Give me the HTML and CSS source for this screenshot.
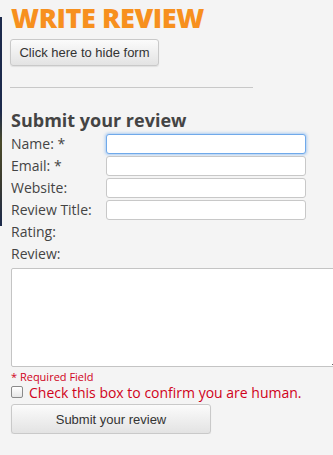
FILE: index.html
```html
<!DOCTYPE html>
<html>
<head>
<meta charset="utf-8">
<link rel="stylesheet" href="styles.css">
</head>
<body>
<div class="edge"></div>
<div class="page">
  <h1 class="title">WRITE REVIEW</h1>
  <button class="btn hide-btn">Click here to hide form</button>
  <hr class="rule">
  <h2 class="subtitle">Submit your review</h2>
  <form class="form">
    <div class="row"><label>Name: *</label><input class="field focus" type="text"></div>
    <div class="row"><label>Email: *</label><input class="field" type="text"></div>
    <div class="row"><label>Website:</label><input class="field" type="text"></div>
    <div class="row"><label>Review Title:</label><input class="field" type="text"></div>
    <div class="row"><label>Rating:</label></div>
    <div class="row"><label>Review:</label></div>
    <textarea class="area"></textarea>
    <div class="req">* Required Field</div>
    <div class="human"><span class="box"></span><span>Check this box to confirm you are human.</span></div>
    <button type="button" class="btn submit-btn">Submit your review</button>
  </form>
</div>
</body>
</html>
```
FILE: styles.css
```css
html, body {
  margin: 0;
  padding: 0;
  background: #f4f4f4;
  overflow: hidden;
}
.edge {
  position: absolute;
  left: 0;
  top: 17px;
  width: 2px;
  height: 209px;
  background: linear-gradient(#1c2a4c 0%, #1c2a4c 45%, #4a4a2a 60%, #3a3a30 80%, #1c2a4c 100%);
}
.page {
  padding: 0 0 0 11px;
  font-family: "Open Sans", sans-serif;
  color: #444;
}
.title {
  margin: 0;
  padding-top: 1px;
  font-size: 27px;
  line-height: 34px;
  font-weight: 800;
  color: #f7901e;
  letter-spacing: -0.4px;
  height: 36px;
}
.btn {
  display: block;
  font-family: "Liberation Sans", Arial, sans-serif;
  font-size: 13px;
  color: #333;
  background: linear-gradient(#fbfbfb, #e3e3e3);
  border: 1px solid #c9c9c9;
  border-radius: 3px;
  box-shadow: 0 1px 1px rgba(0,0,0,0.08);
  padding: 0;
}
.hide-btn {
  margin-left: -1px;
  width: 149px;
  height: 27px;
  margin-top: 2px;
}
.rule {
  margin: 21px 0 0 -1px;
  width: 243px;
  border: 0;
  border-top: 1px solid #c8c8c8;
  height: 0;
}
.subtitle {
  margin: 21px 0 0 0;
  font-size: 18px;
  line-height: 22px;
  font-weight: 700;
  color: #444;
  height: 24px;
}
.form {
  display: flex;
  flex-direction: column;
}
.row {
  display: flex;
  align-items: center;
  height: 22px;
}
.row label {
  width: 95px;
  font-size: 14px;
  line-height: 20px;
  color: #444;
}
.field {
  box-sizing: border-box;
  width: 200px;
  height: 20px;
  border: 1px solid #c8c8c8;
  border-radius: 3px;
  background: #fff;
  margin: 0;
  padding: 0 4px;
}
.field.focus {
  border-color: #6fa9ea;
  box-shadow: 0 0 3px 1px rgba(110,170,240,0.55);
}
.area {
  box-sizing: border-box;
  margin: 3px 0 0 0;
  width: 330px;
  height: 99px;
  border: 1px solid #c4c4c4;
  border-radius: 2px;
  background: #fff;
  resize: vertical;
}
.req {
  margin-top: 3px;
  font-size: 11px;
  line-height: 14px;
  color: #d0021b;
}
.human {
  display: flex;
  align-items: center;
  gap: 6px;
  font-size: 14px;
  line-height: 18px;
  color: #d0021b;
}
.box {
  width: 10px;
  height: 10px;
  border: 1px solid #8a8a8a;
  border-radius: 2px;
  background: linear-gradient(#ffffff, #e6e6e6);
  margin-top: -3px;
}
.submit-btn {
  margin-top: 2px;
  width: 200px;
  height: 30px;
  font-size: 13px;
}
```
